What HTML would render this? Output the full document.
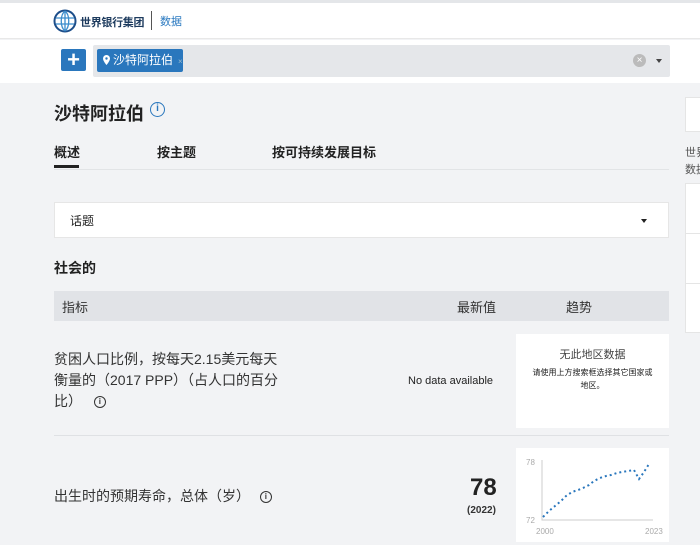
<!DOCTYPE html>
<html><head><meta charset="utf-8"><style>
*{margin:0;padding:0;box-sizing:border-box}
body{width:700px;height:545px;overflow:hidden;background:#f2f3f5;font-family:"Liberation Sans","Noto Sans CJK SC",sans-serif;color:#222;position:relative}
.a{position:absolute;white-space:nowrap}
.ic{display:inline-block;width:12px;height:12px;border:1.3px solid #333;border-radius:50%;font-size:8px;line-height:10px;text-align:center;font-weight:bold;vertical-align:middle}
</style></head><body>
<div class="a" style="left:0;top:0;width:700px;height:3px;background:#e4e6e9"></div>
<div class="a" style="left:0;top:3px;width:700px;height:36px;background:#fff;border-bottom:1px solid #e8e8e8"></div>
<svg class="a" style="left:53px;top:9px" width="24" height="24" viewBox="0 0 24 24"><circle cx="12" cy="12" r="10.5" fill="none" stroke="#1c4e8a" stroke-width="2"/><path d="M3 9h18M3 15h18M12 2c-5 4-5 16 0 20M12 2c5 4 5 16 0 20M12 2v20" stroke="#3a8ccc" stroke-width="1.3" fill="none"/></svg>
<div class="a" style="left:80px;top:14px;font-size:11px;font-weight:bold;color:#1d3b5e;letter-spacing:-0.3px">世界银行集团</div>
<div class="a" style="left:151px;top:11px;width:1px;height:19px;background:#555"></div>
<div class="a" style="left:160px;top:13px;font-size:11px;color:#2a79c0">数据</div>
<div class="a" style="left:0;top:40px;width:700px;height:43px;background:#fff"></div>
<div class="a" style="left:61px;top:49px;width:25px;height:22px;background:#2a77bd;border-radius:2px;color:#fff;font-size:22px;line-height:21px;text-align:center;font-weight:bold">+</div>
<div class="a" style="left:93px;top:45px;width:577px;height:32px;background:#e5e7ea;border-radius:2px"></div>
<div class="a" style="left:97px;top:49px;width:86px;height:23px;background:#2a77bd;border-radius:2px;color:#fff;font-size:12px;line-height:23px;padding-left:16px;overflow:hidden">沙特阿拉伯<span style="font-size:8px;color:#9bc;margin-left:5px">×</span></div>
<svg class="a" style="left:103px;top:55px" width="7" height="10" viewBox="0 0 7 10"><path d="M3.5 0a3.5 3.5 0 0 0-3.5 3.5c0 2.5 3.5 6.5 3.5 6.5s3.5-4 3.5-6.5A3.5 3.5 0 0 0 3.5 0z" fill="#fff"/><circle cx="3.5" cy="3.5" r="1.2" fill="#2a77bd"/></svg>
<div class="a" style="left:633px;top:54px;width:13px;height:13px;border-radius:50%;background:#bbb;color:#fff;font-size:10px;line-height:13px;text-align:center">×</div>
<div class="a" style="left:656px;top:59px;border-left:3px solid transparent;border-right:3px solid transparent;border-top:4px solid #444"></div>
<div class="a" style="left:54px;top:100px;font-size:18px;font-weight:bold;color:#222">沙特阿拉伯</div>
<div class="a" style="left:150px;top:102px;width:15px;height:15px;border:1.5px solid #2a77bd;border-radius:50%;color:#2a77bd;font-size:10px;line-height:12px;text-align:center;font-weight:bold">i</div>
<div class="a" style="left:54px;top:142px;font-size:13px;font-weight:bold">概述</div>
<div class="a" style="left:54px;top:165px;width:25px;height:3px;background:#222"></div>
<div class="a" style="left:157px;top:142px;font-size:13px;font-weight:bold">按主题</div>
<div class="a" style="left:272px;top:142px;font-size:13px;font-weight:bold">按可持续发展目标</div>
<div class="a" style="left:54px;top:169px;width:615px;height:1px;background:#e2e4e6"></div>
<div class="a" style="left:54px;top:202px;width:615px;height:36px;background:#fff;border:1px solid #e6e6e6"></div>
<div class="a" style="left:70px;top:212px;font-size:12px">话题</div>
<div class="a" style="left:641px;top:219px;border-left:3px solid transparent;border-right:3px solid transparent;border-top:4px solid #222"></div>
<div class="a" style="left:54px;top:258px;font-size:14px;font-weight:bold">社会的</div>
<div class="a" style="left:54px;top:291px;width:615px;height:30px;background:#e1e3e7"></div>
<div class="a" style="left:62px;top:297px;font-size:13px;color:#333">指标</div>
<div class="a" style="left:457px;top:297px;font-size:13px;color:#333">最新值</div>
<div class="a" style="left:566px;top:297px;font-size:13px;color:#333">趋势</div>
<div class="a" style="left:54px;top:435px;width:615px;height:1px;background:#dfe1e4"></div>
<div class="a" style="left:54px;top:349px;font-size:14px;line-height:21px;color:#333">贫困人口比例，按每天2.15美元每天<br>衡量的（2017 PPP）（占人口的百分<br>比） <span class="ic" style="margin-left:8px">i</span></div>
<div class="a" style="left:408px;top:375px;font-size:11px;color:#222">No data available</div>
<div class="a" style="left:516px;top:334px;width:153px;height:94px;background:#fff"></div>
<div class="a" style="left:516px;top:346px;width:153px;text-align:center;font-size:11px;color:#444">无此地区数据</div>
<div class="a" style="left:516px;top:366px;width:153px;text-align:center;font-size:8px;line-height:13px;color:#222">请使用上方搜索框选择其它国家或<br>地区。</div>
<div class="a" style="left:54px;top:486px;font-size:14px;color:#333">出生时的预期寿命，总体（岁） <span class="ic" style="margin-left:6px">i</span></div>
<div class="a" style="left:470px;top:474px;font-size:24px;font-weight:bold;color:#222">78</div>
<div class="a" style="left:467px;top:505px;font-size:10px;font-weight:bold;color:#333">(2022)</div>
<div class="a" style="left:516px;top:448px;width:153px;height:94px;background:#fff"></div>
<svg class="a" style="left:516px;top:448px" width="153" height="94">
<text x="10" y="17" font-size="8" fill="#aaa" font-family="Liberation Sans">78</text>
<text x="10" y="75" font-size="8" fill="#aaa" font-family="Liberation Sans">72</text>
<text x="20" y="86" font-size="8" fill="#aaa" font-family="Liberation Sans">2000</text>
<text x="129" y="86" font-size="8" fill="#aaa" font-family="Liberation Sans">2023</text>
<path d="M26 12V72H137" stroke="#ccc" fill="none"/>
<polyline points="27,69 33,63 39,58 45,53 50,48 56,44 62,42 67,40 73,37 78,33 84,30 90,28 95,27 101,25 106,24 112,23 118,22 123,31 128,24 133,16" fill="none" stroke="#2a77bd" stroke-width="2" stroke-dasharray="2 3"/>
</svg>
<div class="a" style="left:685px;top:97px;width:20px;height:35px;background:#fff;border:1px solid #e5e5e5"></div>
<div class="a" style="left:685px;top:145px;font-size:11px;line-height:17px;color:#555">世界<br>数据</div>
<div class="a" style="left:685px;top:183px;width:20px;height:150px;background:#fff;border:1px solid #e5e5e5"></div>
<div class="a" style="left:685px;top:233px;width:20px;height:1px;background:#e5e5e5"></div>
<div class="a" style="left:685px;top:283px;width:20px;height:1px;background:#e5e5e5"></div>
</body></html>
